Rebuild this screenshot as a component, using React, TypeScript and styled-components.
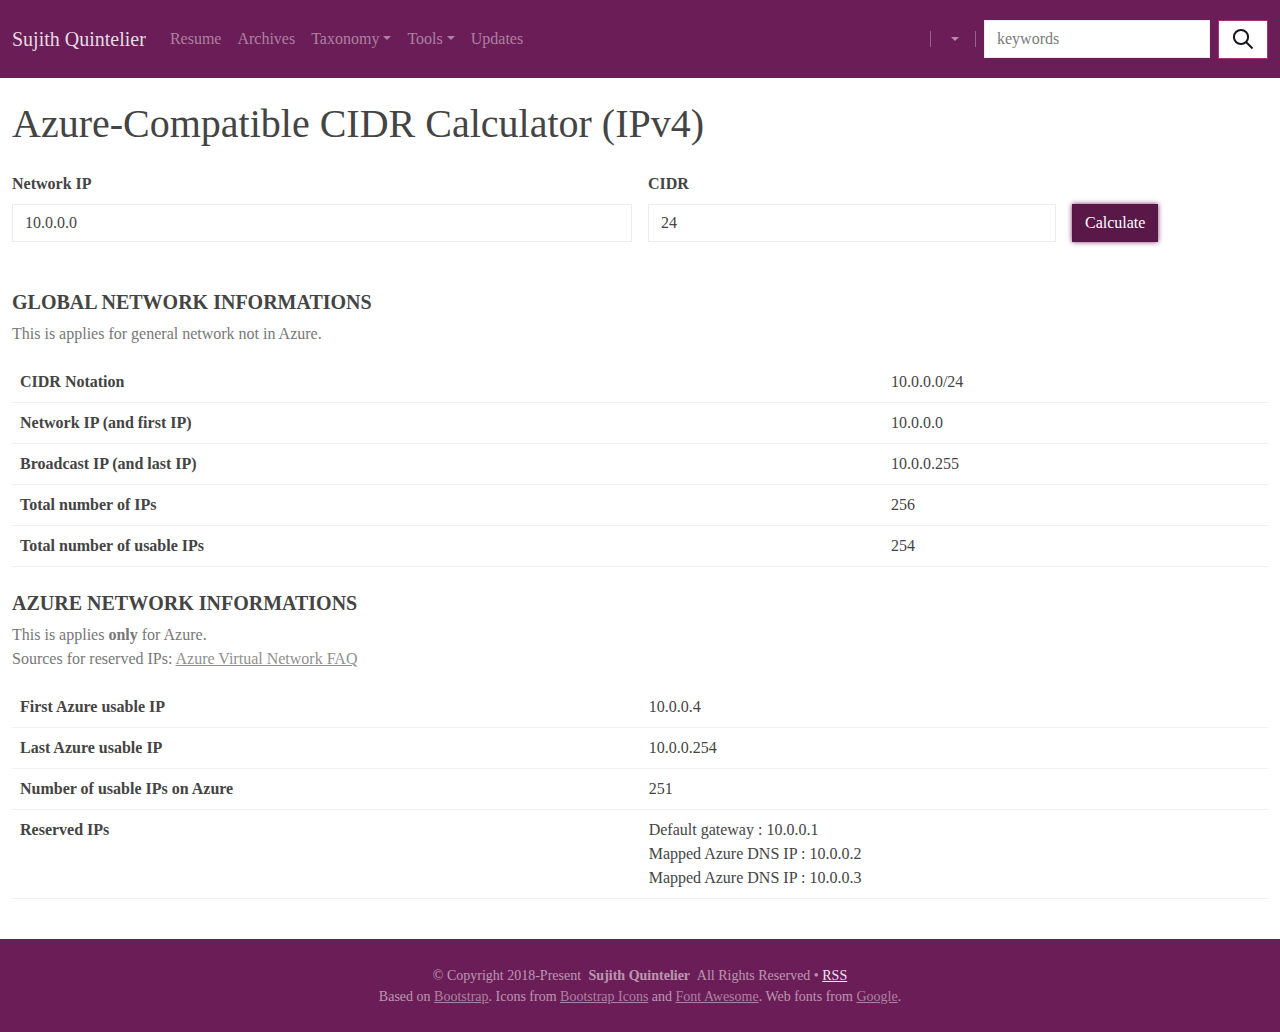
import React from 'react';
import styled, { createGlobalStyle } from 'styled-components';

const GlobalStyle = createGlobalStyle`
  *, *::before, *::after { box-sizing: border-box; }
  body {
    margin: 0;
    background: #fff;
    color: #444;
    font-family: "Liberation Serif", "Times New Roman", serif;
    font-size: 16px;
    line-height: 24px;
  }
`;

const Navbar = styled.header`
  display: flex;
  align-items: center;
  padding: 19px 12px;
  background: #6b1d57;
`;

const Brand = styled.a`
  margin-right: 16px;
  color: rgba(255, 255, 255, 0.85);
  font-size: 20px;
  line-height: 30px;
  text-decoration: none;
`;

const NavLinks = styled.nav`
  display: flex;
  flex: 1;
`;

const NavLink = styled.a`
  padding: 0 8px;
  color: rgba(255, 255, 255, 0.45);
  text-decoration: none;
`;

const Caret = styled.span`
  display: inline-block;
  margin-left: 4px;
  vertical-align: 4px;
  border-top: 4px solid;
  border-left: 4px solid transparent;
  border-right: 4px solid transparent;
`;

const Divider = styled.span`
  width: 1px;
  height: 16px;
  background: rgba(255, 255, 255, 0.3);
`;

const ThemeToggle = styled.button`
  padding: 1px 16px 0;
  border: 0;
  background: none;
  color: rgba(255, 255, 255, 0.5);
  font: inherit;
`;

const SearchForm = styled.form`
  display: flex;
  align-items: center;
  gap: 8px;
  min-height: 40px;
  margin-left: 8px;
`;

const Input = styled.input`
  width: 100%;
  height: 38px;
  padding: 6px 12px;
  border: 1px solid #ececec;
  border-radius: 0;
  background: #fff;
  color: #444;
  font: inherit;
  &::placeholder { color: #7a7a7a; opacity: 1; }
`;

const SearchInput = styled(Input)`
  width: 226px;
`;

const SearchButton = styled.button`
  display: flex;
  align-items: center;
  justify-content: center;
  width: 50px;
  height: 39px;
  padding: 0;
  border: 1px solid #a92f78;
  background: #fff;
  color: #16161d;
`;

const Main = styled.main`
  padding: 22px 12px 40px;
`;

const Title = styled.h1`
  margin: 0 0 24px;
  font-size: 40px;
  font-weight: 400;
  line-height: 48px;
`;

const CalcForm = styled.form`
  display: grid;
  grid-template-columns: 6fr 4fr 2fr;
  align-items: end;
  margin: 0 -8px 48px;
`;

const Field = styled.div`
  padding: 0 8px;
`;

const Label = styled.label`
  display: block;
  margin-bottom: 8px;
  font-weight: 700;
`;

const CalcButton = styled.button`
  display: block;
  height: 38px;
  padding: 6px 12px;
  border: 1px solid #561746;
  background: #5a1849;
  box-shadow: 0 0 5px rgba(107, 29, 87, 0.9);
  color: #fff;
  font: inherit;
`;

const Section = styled.section`
  & + & { margin-top: 24px; }
`;

const SectionTitle = styled.h2`
  margin: 0 0 8px;
  font-size: 20px;
  line-height: 24px;
  text-transform: uppercase;
`;

const Note = styled.p`
  margin: 0 0 16px;
  color: #777;
`;

const NoteLink = styled.a`
  color: #909090;
`;

const Table = styled.table`
  width: 100%;
  border-collapse: collapse;
`;

const HeadCell = styled.th`
  padding: 8px;
  border-bottom: 1px solid #f0f0f0;
  text-align: left;
  vertical-align: top;
`;

const Cell = styled.td`
  padding: 8px;
  border-bottom: 1px solid #f0f0f0;
`;

const Line = styled.div``;

const Footer = styled.footer`
  padding: 26px 12px 25px;
  background: #6b1d57;
  color: rgba(255, 255, 255, 0.55);
  font-size: 14px;
  line-height: 21px;
  text-align: center;
`;

const FooterText = styled.p`
  margin: 0;
`;

const FooterName = styled.strong`
  margin: 0 4px;
`;

const FooterLink = styled.a<{ $bright?: boolean }>`
  color: ${(p) => (p.$bright ? 'rgba(255, 255, 255, 0.9)' : 'rgba(255, 255, 255, 0.45)')};
`;

type Row = { name: string; values: string[] };

const globalRows: Row[] = [
  { name: 'CIDR Notation', values: ['10.0.0.0/24'] },
  { name: 'Network IP (and first IP)', values: ['10.0.0.0'] },
  { name: 'Broadcast IP (and last IP)', values: ['10.0.0.255'] },
  { name: 'Total number of IPs', values: ['256'] },
  { name: 'Total number of usable IPs', values: ['254'] },
];

const azureRows: Row[] = [
  { name: 'First Azure usable IP', values: ['10.0.0.4'] },
  { name: 'Last Azure usable IP', values: ['10.0.0.254'] },
  { name: 'Number of usable IPs on Azure', values: ['251'] },
  {
    name: 'Reserved IPs',
    values: ['Default gateway : 10.0.0.1', 'Mapped Azure DNS IP : 10.0.0.2', 'Mapped Azure DNS IP : 10.0.0.3'],
  },
];

function InfoTable({ rows }: { rows: Row[] }) {
  return (
    <Table>
      <tbody>
        {rows.map((row) => (
          <tr key={row.name}>
            <HeadCell scope="row">{row.name}</HeadCell>
            <Cell>{row.values.map((value) => <Line key={value}>{value}</Line>)}</Cell>
          </tr>
        ))}
      </tbody>
    </Table>
  );
}

export default function App() {
  return (
    <>
      <GlobalStyle />
      <Navbar>
        <Brand href="#">Sujith Quintelier</Brand>
        <NavLinks>
          <NavLink href="#">Resume</NavLink>
          <NavLink href="#">Archives</NavLink>
          <NavLink href="#">Taxonomy<Caret /></NavLink>
          <NavLink href="#">Tools<Caret /></NavLink>
          <NavLink href="#">Updates</NavLink>
        </NavLinks>
        <Divider />
        <ThemeToggle type="button" aria-label="Toggle theme"><Caret /></ThemeToggle>
        <Divider />
        <SearchForm onSubmit={(e) => e.preventDefault()}>
          <SearchInput type="search" placeholder="keywords" aria-label="keywords" />
          <SearchButton type="submit" aria-label="Search">
            <svg width="24" height="24" viewBox="0 0 24 24" fill="none" stroke="currentColor" strokeWidth="2" aria-hidden="true">
              <circle cx="10" cy="10" r="7.1" />
              <path d="M15 15l6.5 6.5" />
            </svg>
          </SearchButton>
        </SearchForm>
      </Navbar>
      <Main>
        <Title>Azure-Compatible CIDR Calculator (IPv4)</Title>
        <CalcForm onSubmit={(e) => e.preventDefault()}>
          <Field>
            <Label htmlFor="network-ip">Network IP</Label>
            <Input id="network-ip" defaultValue="10.0.0.0" />
          </Field>
          <Field>
            <Label htmlFor="cidr">CIDR</Label>
            <Input id="cidr" defaultValue="24" />
          </Field>
          <Field>
            <CalcButton type="submit">Calculate</CalcButton>
          </Field>
        </CalcForm>
        <Section>
          <SectionTitle>Global network informations</SectionTitle>
          <Note>This is applies for general network not in Azure.</Note>
          <InfoTable rows={globalRows} />
        </Section>
        <Section>
          <SectionTitle>Azure network informations</SectionTitle>
          <Note>
            This is applies <strong>only</strong> for Azure.<br />
            Sources for reserved IPs: <NoteLink href="#">Azure Virtual Network FAQ</NoteLink>
          </Note>
          <InfoTable rows={azureRows} />
        </Section>
      </Main>
      <Footer>
        <FooterText>
          © Copyright 2018-Present <FooterName>Sujith Quintelier</FooterName> All Rights Reserved • <FooterLink href="#" $bright>RSS</FooterLink>
        </FooterText>
        <FooterText>
          Based on <FooterLink href="#">Bootstrap</FooterLink>. Icons from <FooterLink href="#">Bootstrap Icons</FooterLink> and <FooterLink href="#">Font Awesome</FooterLink>. Web fonts from <FooterLink href="#">Google</FooterLink>.
        </FooterText>
      </Footer>
    </>
  );
}
